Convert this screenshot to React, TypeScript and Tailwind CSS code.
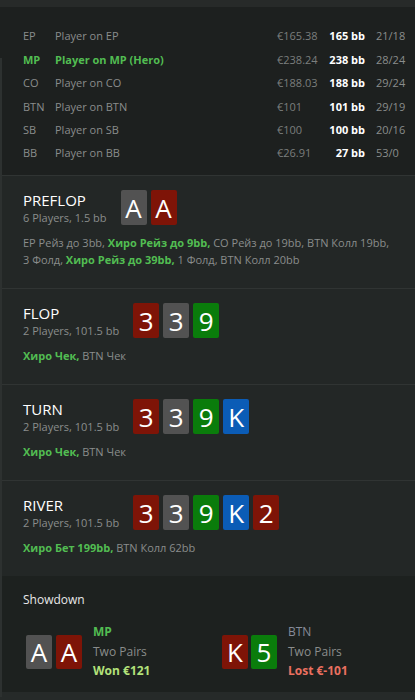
import React from "react";

type CardColor = "red" | "gray" | "green" | "blue";

const cardBg: Record<CardColor, string> = {
  red: "bg-[#7e1407]",
  gray: "bg-[#525252]",
  green: "bg-[#0a7c0b]",
  blue: "bg-[#0b5cb6]",
};

function Card({ r, c, h = "h-[35px]" }: { r: string; c: CardColor; h?: string }) {
  return (
    <div
      className={`w-[26px] ${h} rounded-[2px] ${cardBg[c]} flex items-center justify-center text-[26px] leading-none text-white`}
    >
      {r}
    </div>
  );
}

const players = [
  { pos: "EP", name: "Player on EP", eur: "€165.38", bb: "165 bb", hands: "21/18" },
  { pos: "MP", name: "Player on MP (Hero)", eur: "€238.24", bb: "238 bb", hands: "28/24", hero: true },
  { pos: "CO", name: "Player on CO", eur: "€188.03", bb: "188 bb", hands: "29/24" },
  { pos: "BTN", name: "Player on BTN", eur: "€101", bb: "101 bb", hands: "29/19" },
  { pos: "SB", name: "Player on SB", eur: "€100", bb: "100 bb", hands: "20/16" },
  { pos: "BB", name: "Player on BB", eur: "€26.91", bb: "27 bb", hands: "53/0" },
];

function Hero({ children }: { children: React.ReactNode }) {
  return <span className="font-bold text-[#52bd52]">{children}</span>;
}

function Street({
  title,
  sub,
  cards,
  children,
}: {
  title: string;
  sub: string;
  cards: { r: string; c: CardColor }[];
  children: React.ReactNode;
}) {
  return (
    <section className="border-t border-[#303433] bg-[#232726] pl-[23px] pr-[12px] pt-[14px] pb-[20px]">
      <div className="flex items-start gap-[14px]">
        <div className="flex flex-col">
          <div className="text-[15px] leading-[20px] text-white">{title}</div>
          <div className="text-[11px] leading-[15px] text-[#8a8d8c]">{sub}</div>
        </div>
        <div className="flex gap-[4px]">
          {cards.map((c, i) => (
            <Card key={i} r={c.r} c={c.c} />
          ))}
        </div>
      </div>
      <div className="mt-[9px] text-[11px] leading-[17px] text-[#8a8d8c]">{children}</div>
    </section>
  );
}

export default function App() {
  return (
    <div
      className="relative w-[415px] h-[700px] overflow-hidden bg-[#262a29]"
      style={{ fontFamily: '"Open Sans", "Noto Sans", sans-serif' }}
    >
      <div className="h-[7px] bg-[#272a29]" />
      {/* players */}
      <section className="bg-[#1d201f] pt-[18px] pb-[10px] pl-[23px] pr-[9px]">
        {players.map((p) => (
          <div key={p.pos} className="flex items-center h-[23.4px] text-[11px]">
            <div className={`w-[32px] ${p.hero ? "font-bold text-[#52bd52]" : "text-[#8a8d8c]"}`}>{p.pos}</div>
            <div className={`flex-1 ${p.hero ? "font-bold text-[#52bd52]" : "text-[#8a8d8c]"}`}>{p.name}</div>
            <div className="w-[48px] text-[#7b7e7d]">{p.eur}</div>
            <div className="w-[40px] text-right font-bold text-white">{p.bb}</div>
            <div className="ml-[11px] w-[30px] text-[#8a8d8c]">{p.hands}</div>
          </div>
        ))}
      </section>

      <Street
        title="PREFLOP"
        sub="6 Players, 1.5 bb"
        cards={[
          { r: "A", c: "gray" },
          { r: "A", c: "red" },
        ]}
      >
        EP Рейз до 3bb, <Hero>Хиро Рейз до 9bb,</Hero> CO Рейз до 19bb, BTN Колл 19bb,{" "}
        {"3\u00a0Фолд,"} <Hero>Хиро Рейз до 39bb,</Hero> 1 Фолд, BTN Колл 20bb
      </Street>

      <Street
        title="FLOP"
        sub="2 Players, 101.5 bb"
        cards={[
          { r: "3", c: "red" },
          { r: "3", c: "gray" },
          { r: "9", c: "green" },
        ]}
      >
        <Hero>Хиро Чек,</Hero> BTN Чек
      </Street>

      <Street
        title="TURN"
        sub="2 Players, 101.5 bb"
        cards={[
          { r: "3", c: "red" },
          { r: "3", c: "gray" },
          { r: "9", c: "green" },
          { r: "K", c: "blue" },
        ]}
      >
        <Hero>Хиро Чек,</Hero> BTN Чек
      </Street>

      <Street
        title="RIVER"
        sub="2 Players, 101.5 bb"
        cards={[
          { r: "3", c: "red" },
          { r: "3", c: "gray" },
          { r: "9", c: "green" },
          { r: "K", c: "blue" },
          { r: "2", c: "red" },
        ]}
      >
        <Hero>Хиро Бет 199bb,</Hero> BTN Колл 62bb
      </Street>

      {/* showdown */}
      <section className="bg-[#1d211f] h-[116px] pt-[15px] pl-[23px]">
        <div className="text-[12px] leading-[17px] text-[#e8e8e8]">Showdown</div>
        <div className="mt-[14px] flex items-center pl-[3px]">
          <div className="w-[196px] flex items-center">
            <div className="flex gap-[4px]">
              <Card r="A" c="gray" h="h-[34px]" />
              <Card r="A" c="red" h="h-[34px]" />
            </div>
            <div className="ml-[11px] flex flex-col text-[12px] leading-[19.5px]">
              <span className="font-bold text-[#52bd52]">MP</span>
              <span className="text-[#8a8d8c]">Two Pairs</span>
              <span className="font-bold text-[#b3e27a]">Won €121</span>
            </div>
          </div>
          <div className="flex items-center">
            <div className="flex gap-[3px]">
              <Card r="K" c="red" h="h-[34px]" />
              <Card r="5" c="green" h="h-[34px]" />
            </div>
            <div className="ml-[11px] flex flex-col text-[12px] leading-[19.5px]">
              <span className="text-[#868b99]">BTN</span>
              <span className="text-[#8a8d8c]">Two Pairs</span>
              <span className="font-bold text-[#ea7060]">Lost €-101</span>
            </div>
          </div>
        </div>
      </section>

      <div className="absolute left-0 top-[58px] w-[2px] h-[639px] bg-[#2d3130]" />
    </div>
  );
}
